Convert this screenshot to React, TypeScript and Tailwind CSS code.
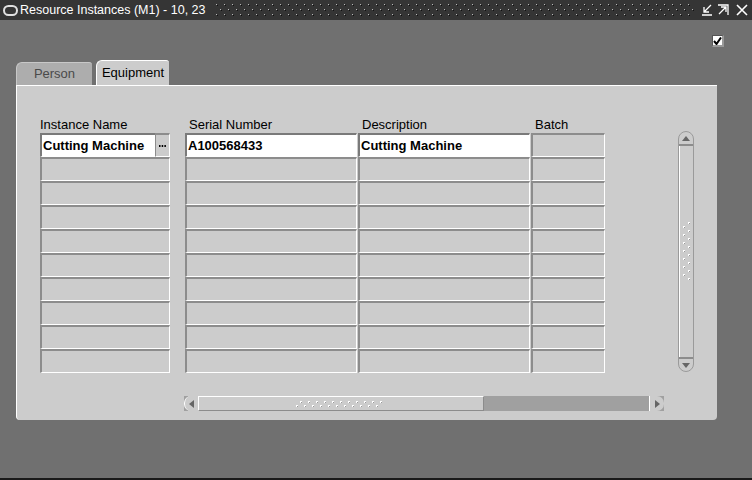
import React from "react";

const font = { fontFamily: '"Liberation Sans", Arial, sans-serif' };

function TitleDots() {
  return (
    <svg width="100%" height="14" className="block">
      <defs>
        <pattern id="dots" x="0" y="0" width="8" height="10" patternUnits="userSpaceOnUse">
          <rect x="0" y="1" width="1" height="1" fill="#b8b8b8" />
          <rect x="1" y="2" width="1" height="1" fill="#111" />
          <rect x="4" y="6" width="1" height="1" fill="#b8b8b8" />
          <rect x="5" y="7" width="1" height="1" fill="#111" />
        </pattern>
      </defs>
      <rect width="100%" height="14" fill="url(#dots)" />
    </svg>
  );
}

function Cell({ w, children, white }: { w: string; children?: React.ReactNode; white?: boolean }) {
  return (
    <div
      className={`${w} h-[24px] shrink-0 border-t-2 border-l-2 border-b border-r ${
        white ? "bg-white border-t-[#7a7a7a] border-l-[#7a7a7a]" : "bg-[#cccccc] border-t-[#8c8c8c] border-l-[#8c8c8c]"
      } border-b-white border-r-white flex items-center pl-[1px] text-[13px] font-bold text-black overflow-hidden whitespace-nowrap`}
    >
      {children}
    </div>
  );
}

function VScroll() {
  return (
    <div className="w-[16px] h-[241px] shrink-0 rounded-t-[8px] rounded-b-[8px] border border-[#9a9a9a] bg-[#cccccc] flex flex-col relative">
      <div className="h-[14px] border-b-2 border-b-[#8c8c8c] flex items-center justify-center">
        <svg width="8" height="5"><polygon points="4,0 8,5 0,5" fill="#666" /></svg>
      </div>
      <div className="flex-1 border-l border-l-white flex items-center justify-center">
        <svg width="8" height="60">
          {Array.from({ length: 8 }).map((_, i) => (
            <g key={i}>
              <rect x="5" y={i * 8} width="2" height="2" fill="#fff" />
              <rect x="6" y={i * 8 + 1} width="1" height="1" fill="#999" />
              <rect x="0" y={i * 8 + 4} width="2" height="2" fill="#fff" />
              <rect x="1" y={i * 8 + 5} width="1" height="1" fill="#999" />
            </g>
          ))}
        </svg>
      </div>
      <div className="h-[14px] border-t-2 border-t-[#8c8c8c] flex items-center justify-center">
        <svg width="8" height="5"><polygon points="0,0 8,0 4,5" fill="#666" /></svg>
      </div>
    </div>
  );
}

function HScroll() {
  return (
    <div className="w-[480px] h-[15px] bg-[#a0a0a0] flex ml-[144px] mt-[23px]">
      <div className="w-[14px] h-full bg-[#cccccc] rounded-l-[7px] border-l border-l-white flex items-center justify-center">
        <svg width="5" height="8"><polygon points="5,0 5,8 0,4" fill="#666" /></svg>
      </div>
      <div className="w-[286px] h-full bg-[#cccccc] border-t border-l border-t-white border-l-white border-b border-b-[#8c8c8c] border-r border-r-[#8c8c8c] flex items-center justify-center">
        <svg width="90" height="8">
          {Array.from({ length: 11 }).map((_, i) => (
            <g key={i}>
              <rect x={i * 8 + 4} y="1" width="2" height="2" fill="#fff" />
              <rect x={i * 8 + 5} y="2" width="1" height="1" fill="#999" />
              <rect x={i * 8} y="5" width="2" height="2" fill="#fff" />
              <rect x={i * 8 + 1} y="6" width="1" height="1" fill="#999" />
            </g>
          ))}
        </svg>
      </div>
      <div className="flex-1" />
      <div className="w-[15px] h-full bg-[#cccccc] rounded-r-[7px] border-l border-l-white flex items-center justify-center">
        <svg width="5" height="8"><polygon points="0,0 5,4 0,8" fill="#666" /></svg>
      </div>
    </div>
  );
}

export default function App() {
  const rows = Array.from({ length: 10 });
  return (
    <div className="w-[752px] h-[480px] bg-[#707070] flex flex-col overflow-hidden" style={font}>
      {/* Title bar */}
      <div className="h-[20px] bg-[#353535] flex items-center shrink-0">
        <div className="w-[15px] h-[11px] shrink-0 ml-[3px] rounded-[6px] border-2 border-[#e0e0e0]" />
        <span className="ml-[2px] text-[12.5px] text-white leading-none whitespace-nowrap shrink-0">
          Resource Instances (M1) - 10, 23
        </span>
        <div className="ml-[10px] flex-1 min-w-0 overflow-hidden">
          <TitleDots />
        </div>
        <div className="flex items-center ml-[6px] mr-[3px] gap-[4px] shrink-0">
          <svg width="12" height="12">
            <path d="M10 1 L3 8 M3 3 L3 8 L8 8 M1 11 L11 11" stroke="#fff" strokeWidth="1.3" fill="none" />
          </svg>
          <svg width="12" height="12">
            <path d="M2 10 L9 3 M4 3 L9 3 L9 8 M1 1 L11 1 L11 11" stroke="#fff" strokeWidth="1.3" fill="none" />
          </svg>
          <svg width="14" height="14" className="ml-[2px]">
            <path d="M2 2 L12 12 M12 2 L2 12" stroke="#fff" strokeWidth="1.6" fill="none" />
          </svg>
        </div>
      </div>

      {/* Checkbox */}
      <div className="flex justify-end mt-[15px] mr-[28px]">
        <div className="w-[12px] h-[12px] bg-white border-t border-l border-t-[#555] border-l-[#555] border-b-2 border-r-2 border-b-[#999] border-r-[#999] flex items-center justify-center">
          <svg width="9" height="8">
            <path d="M1 4 L3.5 7 L8 0.5" stroke="#000" strokeWidth="2" fill="none" />
          </svg>
        </div>
      </div>

      {/* Tabs */}
      <div className="flex items-end ml-[16px] mt-[13px] h-[25px] gap-[4px]">
        <div className="w-[76px] h-[23px] bg-[#adadad] rounded-tl-[6px] rounded-tr-[3px] border-t border-l border-t-[#c8c8c8] border-l-[#c8c8c8] flex items-center justify-center text-[13px] text-[#4a4a4a]">
          Person
        </div>
        <div className="w-[73px] h-[25px] bg-[#cccccc] rounded-tl-[6px] rounded-tr-[3px] border-t border-l border-t-white border-l-white flex items-center justify-center text-[13px] text-black">
          Equipment
        </div>
      </div>

      {/* Panel */}
      <div className="ml-[16px] w-[701px] h-[335px] bg-[#cccccc] border-l border-t border-l-white border-t-white rounded-br-[4px] rounded-bl-[4px] pt-[31px] pl-[23px] flex flex-col">
        <div className="flex text-[13px] text-black leading-[15px] h-[15px]">
          <div className="w-[145px] shrink-0">Instance Name</div>
          <div className="w-[173px] shrink-0 pl-[4px]">Serial Number</div>
          <div className="w-[173px] shrink-0 pl-[4px]">Description</div>
          <div className="w-[74px] shrink-0 pl-[4px]">Batch</div>
        </div>
        <div className="flex mt-[1px]">
          <div className="flex flex-col w-[130px] shrink-0">
            {rows.map((_, i) =>
              i === 0 ? (
                <div key={i} className="flex h-[24px]">
                  <div className="w-[115px] h-[24px] bg-white border-t-2 border-l-2 border-t-[#7a7a7a] border-l-[#7a7a7a] border-b border-b-white flex items-center pl-[1px] text-[13px] font-bold text-black whitespace-nowrap overflow-hidden">
                    Cutting Machine
                  </div>
                  <div className="w-[15px] h-[24px] bg-[#cccccc] border-t-2 border-l border-t-[#8c8c8c] border-l-[#8c8c8c] border-b border-r border-b-white border-r-white flex items-center justify-center">
                    <svg width="7" height="2">
                      <rect x="0" y="0" width="1.5" height="2" fill="#000" />
                      <rect x="2.7" y="0" width="1.5" height="2" fill="#000" />
                      <rect x="5.4" y="0" width="1.5" height="2" fill="#000" />
                    </svg>
                  </div>
                </div>
              ) : (
                <Cell key={i} w="w-[130px]" />
              )
            )}
          </div>
          <div className="w-[15px] shrink-0" />
          <div className="flex flex-col w-[172px] shrink-0">
            {rows.map((_, i) => (
              <Cell key={i} w="w-[172px]" white={i === 0}>
                {i === 0 ? "A100568433" : null}
              </Cell>
            ))}
          </div>
          <div className="w-[1px] shrink-0" />
          <div className="flex flex-col w-[172px] shrink-0">
            {rows.map((_, i) => (
              <Cell key={i} w="w-[172px]" white={i === 0}>
                {i === 0 ? "Cutting Machine" : null}
              </Cell>
            ))}
          </div>
          <div className="w-[1px] shrink-0" />
          <div className="flex flex-col w-[74px] shrink-0">
            {rows.map((_, i) => (
              <Cell key={i} w="w-[74px]" />
            ))}
          </div>
          <div className="w-[73px] shrink-0" />
          <div className="-mt-[2px]">
            <VScroll />
          </div>
        </div>
        <HScroll />
      </div>

      <div className="flex-1" />
      <div className="h-[2px] bg-[#1a1a1a] shrink-0" />
    </div>
  );
}
